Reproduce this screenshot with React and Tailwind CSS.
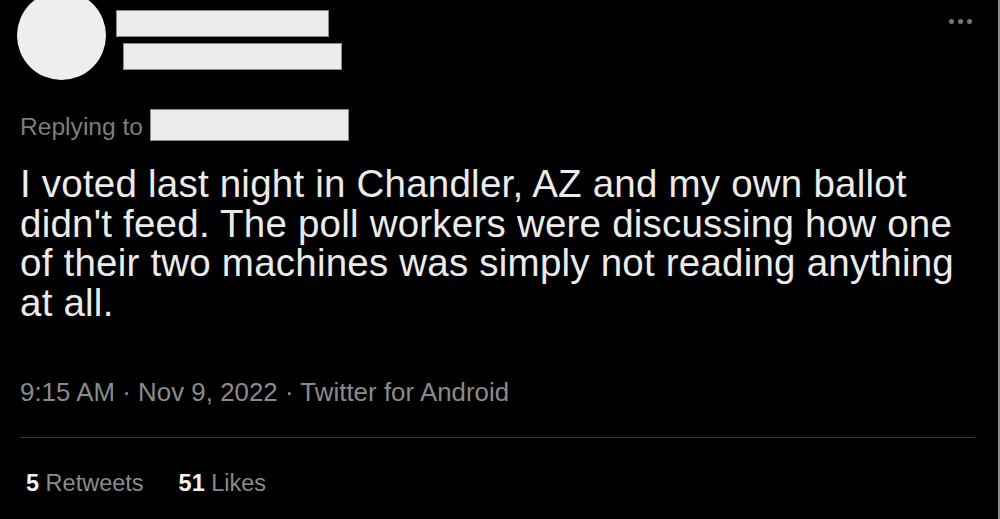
import React from 'react'

function Dots() {
  return (
    <div className="ml-auto mr-[26px] mt-[19px] flex gap-[4px]">
      <span className="w-[5px] h-[5px] rounded-full bg-[#777777]" />
      <span className="w-[5px] h-[5px] rounded-full bg-[#777777]" />
      <span className="w-[5px] h-[5px] rounded-full bg-[#777777]" />
    </div>
  )
}

function App() {
  return (
    <div className="w-[1000px] h-[519px] bg-black flex overflow-hidden font-['Liberation_Sans',Arial,sans-serif]">
      <div className="flex-1 flex flex-col">
        {/* header */}
        <div className="flex items-start h-[80px]">
          <div className="ml-[17px] -mt-[9px] w-[89px] h-[89px] shrink-0 rounded-full bg-[#eeeeee]" />
          <div className="ml-[10px] mt-[10px] flex flex-col gap-[6px]">
            <div className="w-[213px] h-[27px] bg-[#ececec] border border-[#8a8a8a]" />
            <div className="ml-[7px] w-[219px] h-[27px] bg-[#ececec] border border-[#8a8a8a]" />
          </div>
          <Dots />
        </div>

        {/* replying to */}
        <div className="mt-[29px] ml-[20px] flex items-start">
          <span className="mt-[2px] text-[24.6px] leading-[32px] text-[#7d7d7d]">Replying to</span>
          <div className="ml-[7px] w-[199px] h-[32px] bg-[#ececec] border border-[#8a8a8a]" />
        </div>

        {/* tweet body */}
        <p className="mt-[21px] ml-[20px] mr-[23px] text-[38.5px] leading-[39.5px] tracking-[0.22px] text-[#ebebeb]">
          I voted last night in Chandler, AZ and my own ballot didn't feed. The poll workers were discussing how one of their two machines was simply not reading anything at all.
        </p>

        {/* meta */}
        <div className="mt-[55px] ml-[20px] text-[25.8px] leading-[30px] tracking-[0.05px] text-[#8b8b8b]">
          9:15 AM · Nov 9, 2022 · Twitter for Android
        </div>

        <div className="mt-[30px] ml-[20px] mr-[23px] h-px bg-[#3a3a3a]" />

        {/* stats */}
        <div className="mt-[32px] ml-[26px] flex gap-[35px] text-[23.5px] leading-[27px] text-[#8b8b8b]">
          <span><b className="font-bold text-[#f2f2f2]">5</b> Retweets</span>
          <span><b className="font-bold text-[#f2f2f2]">51</b> Likes</span>
        </div>
      </div>
      <div className="w-[2px] h-full bg-[#8f8f8f]" />
    </div>
  )
}

export default App
